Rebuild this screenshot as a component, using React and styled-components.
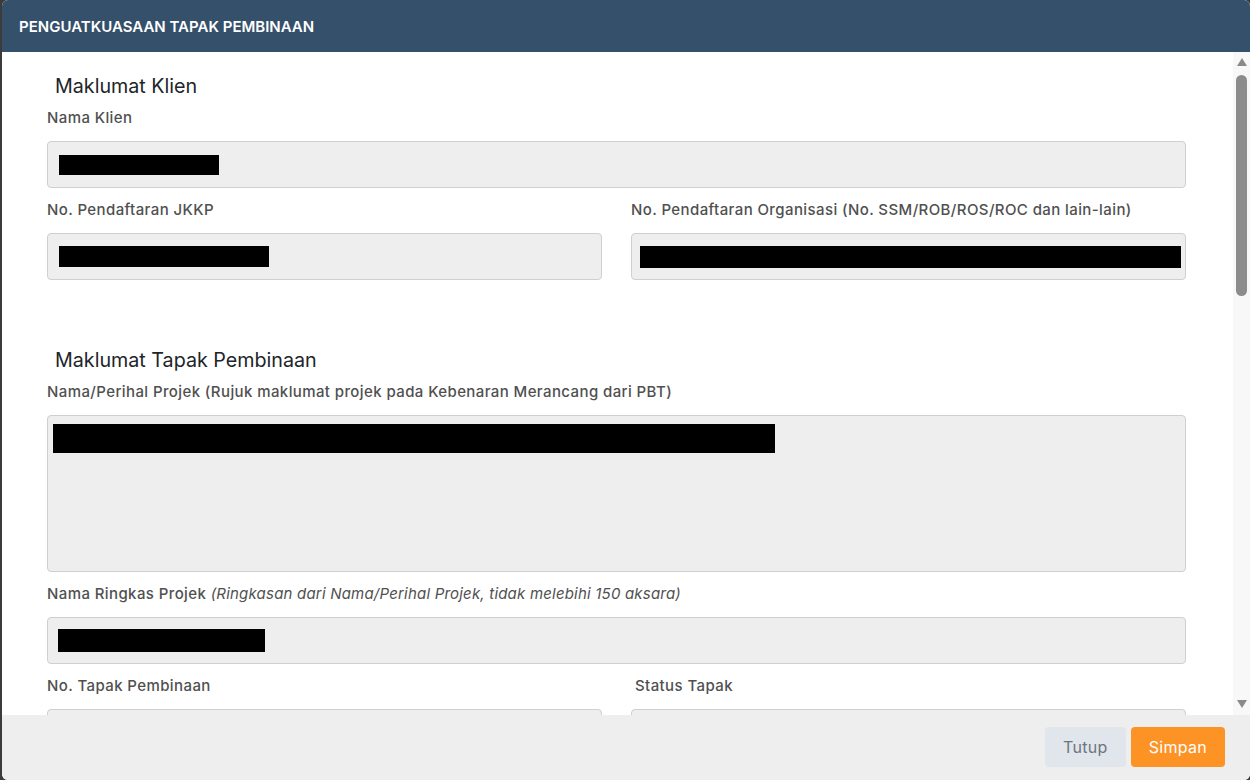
import React from "react";
import styled, { createGlobalStyle } from "styled-components";

const Global = createGlobalStyle`
  html, body { margin: 0; padding: 0; background: #3b3b3b; }
  body { font-family: "Inter", "Noto Sans", sans-serif; overflow: hidden; }
  * { box-sizing: border-box; }
`;

const Backdrop = styled.div`
  width: 1250px;
  height: 780px;
  background: #3b3b3b;
  padding-left: 2px;
  display: flex;
`;

const Modal = styled.div`
  width: 1248px;
  height: 780px;
  background: #fff;
  border-radius: 6px;
  overflow: hidden;
  display: flex;
  flex-direction: column;
`;

const Header = styled.div`
  height: 52px;
  flex: none;
  background: #34506a;
  color: #fff;
  display: flex;
  align-items: center;
  padding: 0 17px;
  font-size: 15px;
  font-weight: 600;
`;

const BodyWrap = styled.div`
  position: relative;
  flex: 1;
  min-height: 0;
  overflow: hidden;
`;

const Body = styled.div`
  height: 100%;
  overflow: hidden;
  padding: 22px 64px 40px 45px;
`;

const SectionTitle = styled.h3`
  margin: ${(p) => p.$top || 0}px 0 10px;
  padding-left: 8px;
  font-size: 19.7px;
  line-height: 24px;
  font-weight: 400;
  color: #212529;
`;

const Field = styled.div`
  margin-bottom: 12px;
  min-width: 0;
`;

const Row = styled.div`
  display: grid;
  grid-template-columns: minmax(0, 1fr) minmax(0, 1fr);
  column-gap: 29px;
`;

const Label = styled.label`
  display: block;
  font-size: 15px;
  line-height: 20px;
  font-weight: 500;
  letter-spacing: 0.4px;
  color: #505050;
  margin-bottom: 13px;
  padding-left: ${(p) => p.$indent || 0}px;
  white-space: nowrap;
`;

const Hint = styled.span`
  font-style: italic;
  font-weight: 400;
  letter-spacing: 0.2px;
`;

const Input = styled.div`
  height: 47px;
  background: #eeeeee;
  border: 1px solid #cfcfcf;
  border-radius: 4px;
  display: flex;
  align-items: center;
  padding: 0 ${(p) => p.$pad ?? 11}px;
`;

const TextArea = styled.div`
  height: 157px;
  background: #eeeeee;
  border: 1px solid #cfcfcf;
  border-radius: 4px;
  padding: 8px 5px;
`;

const Redact = styled.span`
  display: block;
  flex: none;
  height: ${(p) => p.$h || 20}px;
  width: ${(p) => p.$w}px;
  background: #000;
`;

const ScrollTrack = styled.div`
  position: absolute;
  top: 0;
  right: 0;
  bottom: 0;
  width: 17px;
  background: #f8f8f8;
  display: flex;
  flex-direction: column;
  align-items: center;
  padding: 6px 0 7px;
`;

const Arrow = styled.div`
  width: 0;
  height: 0;
  border-left: 5px solid transparent;
  border-right: 5px solid transparent;
  ${(p) =>
    p.$down
      ? "border-top: 8px solid #8a8a8a; margin-top: auto;"
      : "border-bottom: 8px solid #8a8a8a;"}
`;

const Thumb = styled.div`
  width: 11px;
  height: 221px;
  margin-top: 9px;
  background: #8c8c8c;
  border-radius: 6px;
`;

const Footer = styled.div`
  height: 65px;
  flex: none;
  background: #eeeeee;
  display: flex;
  justify-content: flex-end;
  align-items: center;
  gap: 5px;
  padding: 0 25px 1px 0;
`;

const Button = styled.button`
  height: 40px;
  border: none;
  border-radius: 4px;
  font-family: inherit;
  font-size: 16px;
  font-weight: 400;
  letter-spacing: 0.3px;
  padding: 0 18px;
  background: ${(p) => (p.$primary ? "#fd9325" : "#e1e6ed")};
  color: ${(p) => (p.$primary ? "#ffffff" : "#6c757d")};
  cursor: pointer;
`;

export default function App() {
  return (
    <>
      <Global />
      <Backdrop>
        <Modal>
          <Header>PENGUATKUASAAN TAPAK PEMBINAAN</Header>
          <BodyWrap>
            <Body>
              <SectionTitle>Maklumat Klien</SectionTitle>
              <Field>
                <Label>Nama Klien</Label>
                <Input>
                  <Redact $w={160} />
                </Input>
              </Field>
              <Row>
                <Field>
                  <Label>No. Pendaftaran JKKP</Label>
                  <Input>
                    <Redact $w={210} $h={21} />
                  </Input>
                </Field>
                <Field>
                  <Label>No. Pendaftaran Organisasi (No. SSM/ROB/ROS/ROC dan lain-lain)</Label>
                  <Input $pad={8}>
                    <Redact $w={541} $h={22} />
                  </Input>
                </Field>
              </Row>

              <SectionTitle $top={56}>Maklumat Tapak Pembinaan</SectionTitle>
              <Field>
                <Label>Nama/Perihal Projek (Rujuk maklumat projek pada Kebenaran Merancang dari PBT)</Label>
                <TextArea>
                  <Redact $w={722} $h={29} />
                </TextArea>
              </Field>
              <Field>
                <Label>
                  Nama Ringkas Projek <Hint>(Ringkasan dari Nama/Perihal Projek, tidak melebihi 150 aksara)</Hint>
                </Label>
                <Input $pad={10}>
                  <Redact $w={207} $h={23} />
                </Input>
              </Field>
              <Row>
                <Field>
                  <Label>No. Tapak Pembinaan</Label>
                  <Input />
                </Field>
                <Field>
                  <Label $indent={4}>Status Tapak</Label>
                  <Input />
                </Field>
              </Row>
            </Body>
            <ScrollTrack>
              <Arrow />
              <Thumb />
              <Arrow $down />
            </ScrollTrack>
          </BodyWrap>
          <Footer>
            <Button>Tutup</Button>
            <Button $primary>Simpan</Button>
          </Footer>
        </Modal>
      </Backdrop>
    </>
  );
}
